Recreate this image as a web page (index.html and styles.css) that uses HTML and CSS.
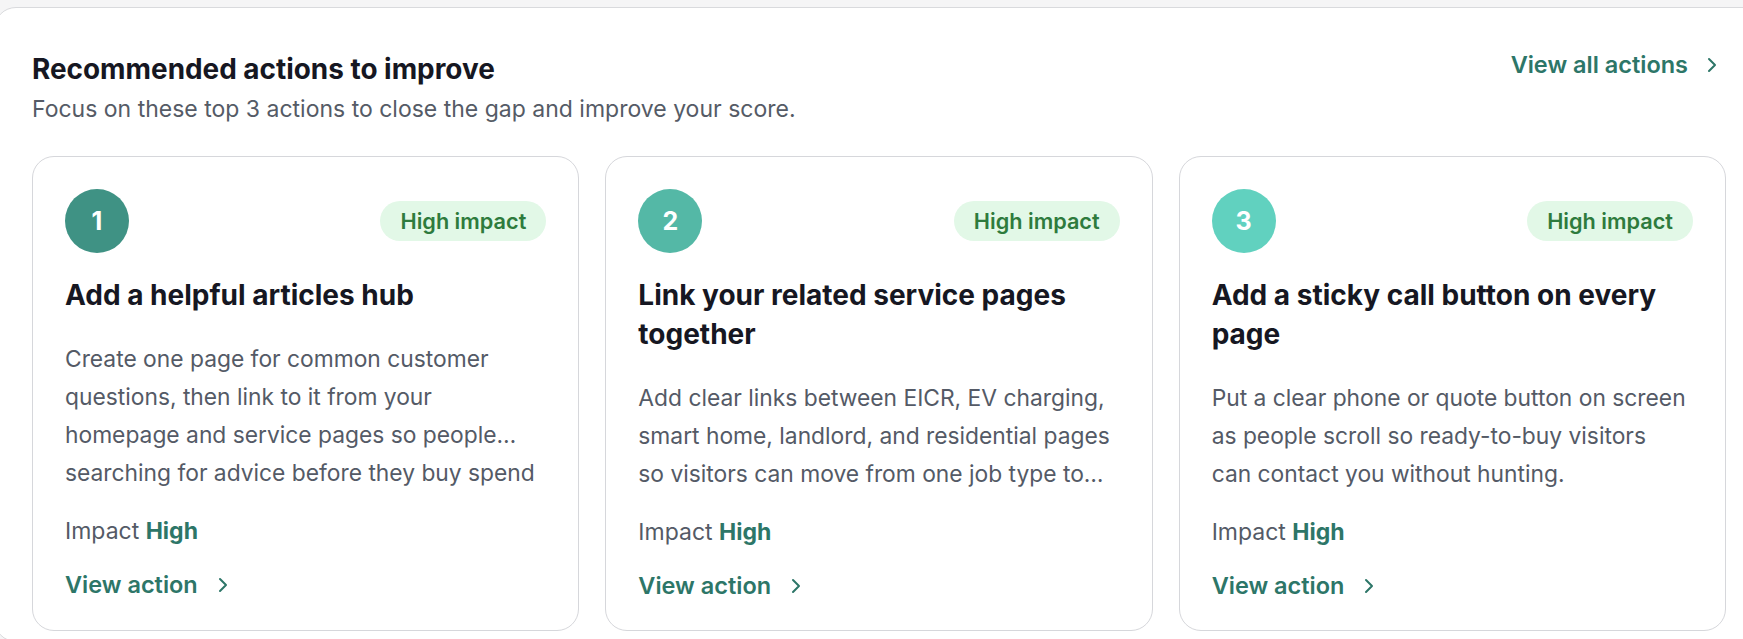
FILE: index.html
```html
<!DOCTYPE html>
<html lang="en">
<head>
<meta charset="utf-8">
<title>Recommended actions</title>
<link rel="stylesheet" href="styles.css">
</head>
<body>
<section class="panel">
  <div class="inner">
    <header class="panel-head">
      <div class="head-text">
        <h2 class="panel-title">Recommended actions to improve</h2>
        <p class="panel-sub">Focus on these top 3 actions to close the gap and improve your score.</p>
      </div>
      <a class="link link-all" href="#">View all actions
        <svg class="chev" viewBox="0 0 10 16" aria-hidden="true"><polyline points="2,2 8,8 2,14"/></svg>
      </a>
    </header>

    <div class="cards">
      <article class="card">
        <div class="card-top">
          <span class="step step-1">1</span>
          <span class="badge">High impact</span>
        </div>
        <h3 class="card-title">Add a helpful articles hub</h3>
        <p class="card-body">Create one page for common customer<br>questions, then link to it from your<br>homepage and service pages so people…<br>searching for advice before they buy spend</p>
        <p class="impact">Impact <strong>High</strong></p>
        <a class="link link-action" href="#">View action
          <svg class="chev" viewBox="0 0 10 16" aria-hidden="true"><polyline points="2,2 8,8 2,14"/></svg>
        </a>
      </article>

      <article class="card">
        <div class="card-top">
          <span class="step step-2">2</span>
          <span class="badge">High impact</span>
        </div>
        <h3 class="card-title">Link your related service pages<br>together</h3>
        <p class="card-body">Add clear links between EICR, EV charging,<br>smart home, landlord, and residential pages<br>so visitors can move from one job type to…</p>
        <p class="impact">Impact <strong>High</strong></p>
        <a class="link link-action" href="#">View action
          <svg class="chev" viewBox="0 0 10 16" aria-hidden="true"><polyline points="2,2 8,8 2,14"/></svg>
        </a>
      </article>

      <article class="card">
        <div class="card-top">
          <span class="step step-3">3</span>
          <span class="badge">High impact</span>
        </div>
        <h3 class="card-title">Add a sticky call button on every<br>page</h3>
        <p class="card-body">Put a clear phone or quote button on screen<br>as people scroll so ready-to-buy visitors<br>can contact you without hunting.</p>
        <p class="impact">Impact <strong>High</strong></p>
        <a class="link link-action" href="#">View action
          <svg class="chev" viewBox="0 0 10 16" aria-hidden="true"><polyline points="2,2 8,8 2,14"/></svg>
        </a>
      </article>
    </div>
  </div>
</section>
</body>
</html>
```
FILE: styles.css
```css
* { box-sizing: border-box; }

html, body {
  margin: 0;
  overflow: hidden;
}

body {
  background: #f5f5f6;
  font-family: Inter, "Liberation Sans", sans-serif;
  color: #161722;
}

/* outer white panel, wider than the viewport on the right */
.panel {
  margin: 7px -60px 0 -6px;
  padding: 43px 0 10px 37px;
  background: #ffffff;
  border: 1px solid #d9dadd;
  border-radius: 22px;
}

.inner {
  width: 1694px;
}

.panel-head {
  display: flex;
  justify-content: space-between;
  align-items: flex-start;
  padding-right: 9px;
}

.panel-title {
  margin: 0;
  font-size: 27.9px;
  line-height: 36px;
  font-weight: 700;
  color: #161722;
}

.panel-sub {
  margin: 6px 0 0;
  font-size: 23px;
  line-height: 32px;
  color: #555b66;
}

.link {
  display: inline-flex;
  align-items: center;
  gap: 19px;
  color: #2d7668;
  text-decoration: none;
  font-weight: 600;
  font-size: 23.5px;
  line-height: 26px;
  white-space: nowrap;
}

.link-all {
  margin-top: 1px;
}

.chev {
  width: 10px;
  height: 16px;
  fill: none;
  stroke: currentColor;
  stroke-width: 2;
  stroke-linecap: round;
  stroke-linejoin: round;
}

.cards {
  margin-top: 31px;
  display: grid;
  grid-template-columns: repeat(3, 1fr);
  gap: 26px;
}

.card {
  border: 1px solid #d6d7db;
  border-radius: 22px;
  background: #fff;
  padding: 32px 32px 28px;
  display: flex;
  flex-direction: column;
  align-items: flex-start;
}

.card-top {
  align-self: stretch;
  display: flex;
  justify-content: space-between;
  align-items: center;
}

.step {
  width: 64px;
  height: 64px;
  border-radius: 50%;
  display: flex;
  align-items: center;
  justify-content: center;
  color: #fff;
  font-weight: 700;
  font-size: 25px;
}

.step-1 { background: #3f9284; }
.step-2 { background: #54b8a6; }
.step-3 { background: #61d1bf; }

.badge {
  height: 40px;
  padding: 0 20px;
  border-radius: 20px;
  background: #e2f8e7;
  color: #2e7b3d;
  font-weight: 600;
  font-size: 21.7px;
  display: flex;
  align-items: center;
}

.card-title {
  margin: 23px 0 0;
  font-size: 28px;
  line-height: 39px;
  font-weight: 700;
  color: #161722;
  white-space: nowrap;
}

.card-body {
  margin: 25px 0 0;
  font-size: 22.8px;
  line-height: 38px;
  color: #545a66;
  white-space: nowrap;
}

.impact {
  margin: 23px 0 0;
  font-size: 23px;
  line-height: 32px;
  color: #545a66;
}

.impact strong {
  color: #2d7668;
  font-weight: 700;
}

.link-action {
  margin-top: 22px;
  line-height: 32px;
  gap: 20px;
}
```
